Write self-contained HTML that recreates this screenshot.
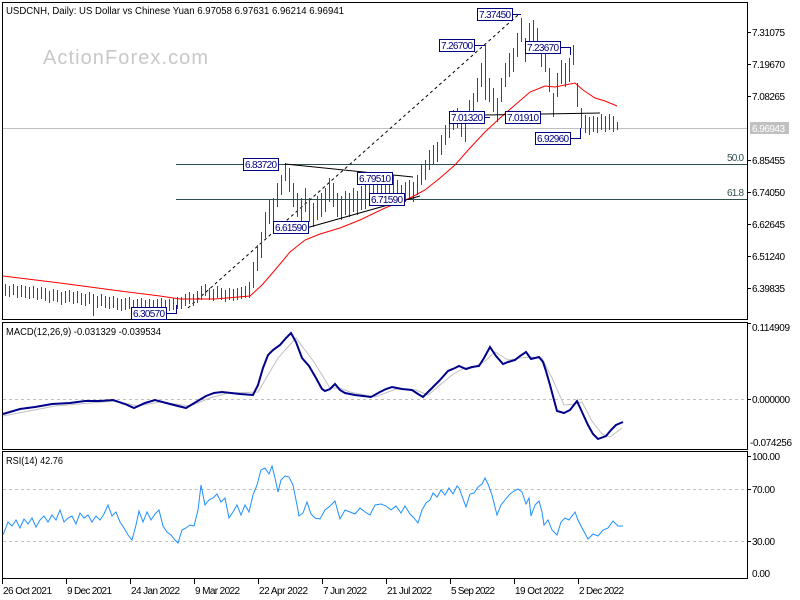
<!DOCTYPE html>
<html><head><meta charset="utf-8"><style>
html,body{margin:0;padding:0;background:#fff;}
svg{display:block;font-family:"Liberation Sans",sans-serif;}
</style></head><body>
<svg width="800" height="600" viewBox="0 0 800 600" xmlns="http://www.w3.org/2000/svg">
<rect width="800" height="600" fill="#fff"/>
<g shape-rendering="crispEdges">
<rect x="2.5" y="2.5" width="745" height="317" fill="none" stroke="#000"/>
<rect x="2.5" y="322.5" width="745" height="127" fill="none" stroke="#000"/>
<rect x="2.5" y="451.5" width="745" height="127" fill="none" stroke="#000"/>
</g>
<text x="43" y="64" font-size="20" fill="#c8c8c8" textLength="165">ActionForex.com</text>
<text x="6" y="14" font-size="10" fill="#000" textLength="338" lengthAdjust="spacingAndGlyphs">USDCNH, Daily:  US Dollar vs Chinese Yuan  6.97058 6.97631 6.96214 6.96941</text>
<g shape-rendering="crispEdges">
<line x1="3" y1="128.5" x2="747" y2="128.5" stroke="#c0c0c0"/>
<line x1="176" y1="164.5" x2="747" y2="164.5" stroke="#2f4f4f"/>
<line x1="176" y1="199.5" x2="747" y2="199.5" stroke="#2f4f4f"/>
</g>
<text x="727" y="161" font-size="10" fill="#2f4f4f" textLength="17">50.0</text>
<text x="727" y="196" font-size="10" fill="#2f4f4f" textLength="17">61.8</text>
<line x1="188" y1="308" x2="518" y2="15" stroke="#000" stroke-dasharray="3,3"/>
<polyline fill="none" stroke="#ff0000" points="3,276 60,283 120,291 160,296 180,299 215,299 250,296 262,285 275,270 290,252 305,240 320,234 340,228 360,220 385,208 410,198 425,190 440,178 455,165 470,148 485,132 500,118 515,105 530,92 545,86 555,87 565,85 575,83 583,90 595,98 605,101 617,106"/>
<path fill="none" stroke="#1a5670" shape-rendering="crispEdges" transform="translate(0.5,0)" d="M5 284V296M9 286V297M13 284V295M17 286V298M21 285V297M25 286V298M29 287V299M33 286V298M37 288V300M41 287V299M45 288V301M49 291V303M53 289V301M57 290V302M61 292V305M65 291V303M69 290V302M73 292V304M77 291V303M81 293V305M85 294V306M89 292V304M93 294V316M97 296V308M101 294V306M105 296V308M109 297V309M113 296V308M117 298V310M121 299V311M125 298V310M129 297V309M133 300V314M137 299V311M141 298V310M145 300V312M149 299V311M153 300V313M157 299V311M161 298V310M165 300V312M169 299V311M173 298V310M177 297V309M181 297V309M185 294V306M189 292V304M193 294V306M197 291V303M201 286V300M205 284V296M209 288V300M213 289V301M217 286V298M221 288V300M225 290V302M229 288V300M233 289V301M237 288V300M241 287V299M245 286V298M249 282V298M253 262V288M257 245V271M261 232V258M265 212V238M269 200V224M273 198V222M277 183V207M281 175V195M285 163V181M289 168V192M293 183V207M297 193V217M301 198V222M305 188V212M309 198V222M313 203V227M317 196V220M321 193V217M325 188V212M329 178V202M333 183V207M337 193V217M341 196V220M345 191V215M349 193V217M353 188V212M357 191V215M361 186V210M365 185V209M369 181V205M373 178V202M377 176V200M381 175V195M385 173V193M389 178V198M393 175V195M397 180V200M401 185V205M405 182V202M409 180V200M413 182V202M417 175V195M421 165V185M425 160V180M429 150V170M433 145V165M437 142V162M441 135V155M445 125V145M449 118V138M453 110V130M457 108V128M461 113V137M465 118V142M469 100V124M473 93V117M477 78V102M481 63V87M485 45V100M489 78V102M493 88V112M497 98V122M501 78V102M505 63V87M509 53V77M513 48V72M517 33V57M521 18V42M525 38V62M529 23V47M533 20V45M537 28V52M541 43V67M545 48V72M549 68V92M553 93V117M557 73V97M561 60V84M565 63V87M569 58V82M573 45V65M577 83V107M581 108V128M585 115V133M589 117V135M593 116V132M597 117V133M601 114V130M605 116V132M609 114V130M613 116V132M617 122V130"/>
<line x1="285" y1="164" x2="413" y2="177" stroke="#000"/>
<line x1="292" y1="232" x2="420" y2="196" stroke="#000"/>
<line x1="484" y1="115" x2="600" y2="113" stroke="#000"/>
<g font-size="10" fill="#000080">
<g stroke="#000080" fill="#fff" shape-rendering="crispEdges">
<rect x="243.5" y="158.5" width="35" height="12"/>
<rect x="357.5" y="172.5" width="35" height="12"/>
<rect x="369.5" y="193.5" width="35" height="12"/>
<rect x="273.5" y="221.5" width="35" height="12"/>
<rect x="131.5" y="307.5" width="35" height="12"/>
<rect x="477.5" y="8.5" width="35" height="12"/>
<rect x="439.5" y="39.5" width="35" height="12"/>
<rect x="525.5" y="41.5" width="35" height="12"/>
<rect x="449.5" y="111.5" width="35" height="12"/>
<rect x="505.5" y="111.5" width="35" height="12"/>
<rect x="535.5" y="132.5" width="35" height="12"/>
</g>
<path fill="none" stroke="#000080" shape-rendering="crispEdges" d="M512.5 14.5H521M474.5 45.5H485M560.5 47.5H570.5V55M484.5 117.5H490M570.5 138.5H580.5V128M166.5 313.5H176.5V305"/>
<g lengthAdjust="spacingAndGlyphs">
<text x="245" y="168" textLength="32">6.83720</text>
<text x="359" y="182" textLength="32">6.79510</text>
<text x="371" y="203" textLength="32">6.71590</text>
<text x="275" y="231" textLength="32">6.61590</text>
<text x="133" y="317" textLength="32">6.30570</text>
<text x="479" y="18" textLength="32">7.37450</text>
<text x="441" y="49" textLength="32">7.26700</text>
<text x="527" y="51" textLength="32">7.23670</text>
<text x="451" y="121" textLength="32">7.01320</text>
<text x="507" y="121" textLength="32">7.01910</text>
<text x="537" y="142" textLength="32">6.92960</text>
</g>
</g>
<g font-size="10" fill="#000">
<path stroke="#000" shape-rendering="crispEdges" d="M747 32.5h4M747 64.5h4M747 96.5h4M747 160.5h4M747 192.5h4M747 224.5h4M747 256.5h4M747 288.5h4M747 323.5h4M747 399.5h4M747 456.5h4M747 489.5h4M747 541.5h4"/>
<text x="752" y="36" textLength="33">7.31075</text>
<text x="752" y="68" textLength="33">7.19670</text>
<text x="752" y="100" textLength="33">7.08265</text>
<rect x="750" y="122" width="39" height="12" fill="#c0c0c0"/>
<text x="752" y="132" fill="#fff" textLength="33">6.96943</text>
<text x="752" y="164" textLength="33">6.85455</text>
<text x="752" y="196" textLength="33">6.74050</text>
<text x="752" y="228" textLength="33">6.62645</text>
<text x="752" y="260" textLength="33">6.51240</text>
<text x="752" y="292" textLength="33">6.39835</text>
<text x="752" y="331" textLength="38">0.114909</text>
<text x="752" y="403" textLength="38">0.000000</text>
<text x="750" y="446" textLength="42">-0.074256</text>
<text x="752" y="460" textLength="28">100.00</text>
<text x="752" y="493" textLength="23">70.00</text>
<text x="752" y="545" textLength="23">30.00</text>
<text x="752" y="577" textLength="18">0.00</text>
</g>
<line x1="3" y1="399.5" x2="747" y2="399.5" stroke="#c0c0c0" stroke-dasharray="3,3"/>
<text x="6" y="335" font-size="10" fill="#000" textLength="155" lengthAdjust="spacingAndGlyphs">MACD(12,26,9) -0.031329 -0.039534</text>
<polyline fill="none" stroke="#c0c0c0" points="3,416 55,406 115,401 138,406 160,402 190,406 210,398 228,393 258,392 278,358 296,338 314,362 330,388 340,388 350,392 375,397 396,389 416,390 428,395 452,375 464,368 472,368 484,362 495,352 508,360 520,358 530,357 542,358 552,378 564,405 575,404 582,402 592,421 602,434 610,437 622,428"/>
<polyline fill="none" stroke="#00008b" stroke-width="2" points="3,414 20,409 35,407 52,404 70,403 85,401 100,401 113,400 125,404 134,408 145,403 155,400 170,404 186,408 196,402 206,396 214,393 222,392 240,394 253,395 258,385 263,368 268,355 273,350 280,345 286,338 291,333 296,342 302,358 309,366 316,378 322,389 325,391 330,389 335,384 340,390 345,393 355,395 371,397 380,392 386,389 392,387 402,389 412,390 418,394 423,397 432,388 440,380 448,371 455,368 459,366 466,369 472,367 479,366 484,358 490,347 496,356 503,364 508,362 515,360 520,356 526,352 531,359 539,357 543,362 546,371 550,385 554,400 557,411 564,413 570,410 577,401 582,412 588,425 593,434 598,439 606,436 611,430 616,425 623,422"/>
<line x1="3" y1="489.5" x2="747" y2="489.5" stroke="#c0c0c0" stroke-dasharray="3,3"/>
<line x1="3" y1="541.5" x2="747" y2="541.5" stroke="#c0c0c0" stroke-dasharray="3,3"/>
<text x="6" y="464" font-size="10" fill="#000" textLength="57" lengthAdjust="spacingAndGlyphs">RSI(14) 42.76</text>
<polyline fill="none" stroke="#1e90ff" points="3,535 8,522 12,526 16,520 20,528 24,519 28,524 32,518 36,527 40,520 44,516 48,522 52,515 56,520 60,510 64,522 68,518 72,516 76,524 80,513 84,518 88,515 92,522 96,516 100,520 104,514 108,505 112,516 116,512 120,522 124,528 128,535 132,540 136,525 139,511 143,522 147,512 151,520 155,514 159,510 163,526 167,532 171,535 175,540 178,543 182,530 186,528 190,525 194,526 198,510 201,485 205,505 209,500 213,498 217,494 221,502 225,498 229,518 233,512 237,505 241,515 245,505 249,512 253,495 257,485 261,470 265,468 269,474 272,466 275,478 278,492 281,480 285,476 289,477 293,485 297,505 299,516 303,513 307,502 311,514 315,518 320,519 325,510 330,506 335,501 338,512 340,519 345,510 350,512 355,514 360,508 365,512 370,515 375,505 381,504 386,506 391,510 396,506 401,513 405,506 410,514 414,518 418,523 422,510 426,503 430,500 433,493 437,497 441,490 445,495 449,488 453,494 457,486 459,488 462,496 466,507 470,494 474,493 478,487 482,484 485,478 488,484 492,495 497,515 501,505 505,500 510,494 514,491 518,489 522,492 526,504 529,498 531,516 535,505 539,501 542,512 544,525 548,520 552,530 557,535 561,522 565,518 569,520 575,512 578,520 582,528 588,539 593,534 598,536 603,530 608,528 613,521 618,526 623,526"/>
<path stroke="#000" shape-rendering="crispEdges" d="M2.5 579v5M66.5 579v5M130.5 579v5M194.5 579v5M258.5 579v5M322.5 579v5M386.5 579v5M450.5 579v5M514.5 579v5M578.5 579v5"/>
<g font-size="10" fill="#000" lengthAdjust="spacingAndGlyphs">
<text x="3" y="594" textLength="49">26 Oct 2021</text>
<text x="67" y="594" textLength="45">9 Dec 2021</text>
<text x="131" y="594" textLength="49">24 Jan 2022</text>
<text x="195" y="594" textLength="45">9 Mar 2022</text>
<text x="259" y="594" textLength="49">22 Apr 2022</text>
<text x="323" y="594" textLength="44">7 Jun 2022</text>
<text x="387" y="594" textLength="45">21 Jul 2022</text>
<text x="451" y="594" textLength="44">5 Sep 2022</text>
<text x="515" y="594" textLength="49">19 Oct 2022</text>
<text x="579" y="594" textLength="45">2 Dec 2022</text>
</g>
</svg>
</body></html>
